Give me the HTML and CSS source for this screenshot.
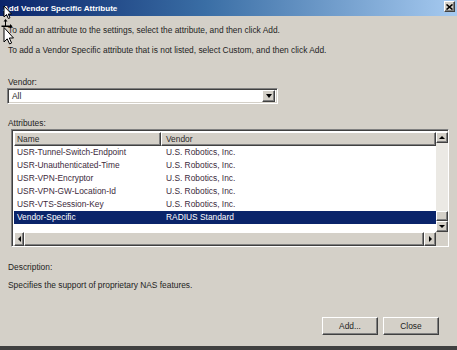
FILE: index.html
```html
<!DOCTYPE html>
<html>
<head>
<meta charset="utf-8">
<link rel="stylesheet" href="styles.css">
</head>
<body>
<div class="window">
  <div class="titlebar">
    <span class="title">Add Vendor Specific Attribute</span>
    <div class="close-btn">
      <svg width="7" height="6" viewBox="0 0 7 6"><path d="M0.5 0.5 L6.5 5.5 M6.5 0.5 L0.5 5.5" stroke="#000" stroke-width="1.6"/></svg>
    </div>
  </div>
  <div class="content">
    <p class="line l1">To add an attribute to the settings, select the attribute, and then click Add.</p>
    <p class="line l2">To add a Vendor Specific attribute that is not listed, select Custom, and then click Add.</p>
    <div class="line lbl-vendor">Vendor:</div>
    <div class="combo sunken">
      <span class="combo-text">All</span>
      <span class="combo-btn raised"><span class="tri-down"></span></span>
    </div>
    <div class="line lbl-attr">Attributes:</div>
    <div class="listbox sunken">
      <div class="lv">
        <div class="lv-header">
          <div class="hcol raised c1">Name</div>
          <div class="hcol raised c2">Vendor</div>
        </div>
        <div class="row"><span class="c1">USR-Tunnel-Switch-Endpoint</span><span class="c2">U.S. Robotics, Inc.</span></div>
        <div class="row"><span class="c1">USR-Unauthenticated-Time</span><span class="c2">U.S. Robotics, Inc.</span></div>
        <div class="row"><span class="c1">USR-VPN-Encryptor</span><span class="c2">U.S. Robotics, Inc.</span></div>
        <div class="row"><span class="c1">USR-VPN-GW-Location-Id</span><span class="c2">U.S. Robotics, Inc.</span></div>
        <div class="row"><span class="c1">USR-VTS-Session-Key</span><span class="c2">U.S. Robotics, Inc.</span></div>
        <div class="row selected"><span class="c1">Vendor-Specific</span><span class="c2">RADIUS Standard</span></div>
      </div>
      <div class="vscroll">
        <div class="sb-btn raised"><span class="tri-up"></span></div>
        <div class="sb-track"></div>
        <div class="sb-thumb-v raised"></div>
        <div class="sb-btn raised"><span class="tri-down small"></span></div>
      </div>
      <div class="hscroll">
        <div class="sb-btn-h raised"><span class="tri-left"></span></div>
        <div class="sb-thumb-h raised"></div>
        <div class="sb-btn-h raised right"><span class="tri-right"></span></div>
      </div>
      <div class="corner"></div>
    </div>
    <div class="line desc-lbl">Description:</div>
    <div class="line desc">Specifies the support of proprietary NAS features.</div>
    <div class="buttons">
      <div class="btn raised">Add...</div>
      <div class="btn raised">Close</div>
    </div>
  </div>
  <svg class="cursor" width="16" height="44" viewBox="0 0 16 44">
    <path d="M4 4 L4 15 L6.5 12.5 L8.3 16.5 L10 15.8 L8.2 12 L11.5 12 Z" fill="#fff" stroke="#000" stroke-width="1"/>
    <path d="M5.5 17 L3.5 19.5 L5 19.5 L5 23.5 L1.5 23.5 L1.5 25 L10 25 L10 26.5 L12.5 24.2 L10 22 L10 23.5 L6 23.5 L6 19.5 L7.5 19.5 Z" fill="#000"/>
    <path d="M4 25.5 L4 40 L7.2 36.8 L9.6 42 L11.6 41 L9.3 36 L13.5 36 Z" fill="#fff" stroke="#000" stroke-width="1"/>
  </svg>
</div>
</body>
</html>
```

FILE: styles.css
```css
* { box-sizing: border-box; }
html, body { margin: 0; padding: 0; }
body {
  width: 457px;
  height: 350px;
  background: #d4d0c8;
  font-family: "Liberation Sans", Arial, sans-serif;
  font-size: 8.4px;
  color: #1e1e1e;
  overflow: hidden;
}
.window {
  position: relative;
  width: 457px;
  height: 350px;
  display: flex;
  flex-direction: column;
  border-bottom: 4px solid #404040;
}
.titlebar {
  height: 16px;
  flex: none;
  display: flex;
  align-items: center;
  justify-content: space-between;
  padding: 0 2px 0 3px;
  background: linear-gradient(to right, #0a246a 0%, #3a6ea5 45%, #a6caf0 100%);
}
.title {
  color: #fff;
  font-weight: bold;
  font-size: 8.1px;
}
.close-btn {
  width: 11px;
  height: 11px;
  margin-top: -3px;
  background: #d4d0c8;
  border: 1px solid;
  border-color: #fff #404040 #404040 #fff;
  box-shadow: inset -1px -1px #808080;
  display: flex;
  align-items: center;
  justify-content: center;
}
.close-btn svg { display: block; }
.content {
  flex: 1;
  padding: 0 0 0 8px;
  display: flex;
  flex-direction: column;
}
.line {
  margin: 0;
  line-height: 10px;
  height: 10px;
  white-space: nowrap;
}
.l1 { margin-top: 9px; }
.l2 { margin-top: 10px; }
.lbl-vendor { margin-top: 22px; }
.sunken {
  border: 1px solid;
  border-color: #808080 #fff #fff #808080;
  box-shadow: inset 1px 1px #404040, inset -1px -1px #d4d0c8;
}
.raised {
  background: #d4d0c8;
  border: 1px solid;
  border-color: #fff #404040 #404040 #fff;
  box-shadow: inset -1px -1px #808080;
}
.combo {
  margin-top: 1px;
  margin-left: -1px;
  width: 271px;
  height: 16px;
  background: #fff;
  display: flex;
  align-items: center;
  padding: 2px 2px 2px 4px;
}
.combo-text { flex: 1; line-height: 10px; }
.combo-btn {
  width: 13px;
  height: 12px;
  display: flex;
  align-items: center;
  justify-content: center;
}
.tri-down {
  width: 0; height: 0;
  border-left: 3.5px solid transparent;
  border-right: 3.5px solid transparent;
  border-top: 4px solid #000;
}
.tri-down.small {
  border-left-width: 3px;
  border-right-width: 3px;
  border-top-width: 3px;
}
.tri-up {
  width: 0; height: 0;
  border-left: 3px solid transparent;
  border-right: 3px solid transparent;
  border-bottom: 3px solid #000;
}
.tri-left {
  width: 0; height: 0;
  border-top: 3px solid transparent;
  border-bottom: 3px solid transparent;
  border-right: 3px solid #000;
}
.tri-right {
  width: 0; height: 0;
  border-top: 3px solid transparent;
  border-bottom: 3px solid transparent;
  border-left: 3px solid #000;
}
.lbl-attr { margin-top: 14px; }
.listbox {
  margin-top: 1px;
  margin-left: 3px;
  width: 438px;
  height: 118px;
  background: #fff;
  padding: 2px;
  display: grid;
  grid-template-columns: 422px 12px;
  grid-template-rows: 100px 14px;
}
.lv {
  overflow: hidden;
  color: #3c2a3c;
}
.lv-header {
  display: flex;
  height: 14px;
}
.hcol {
  height: 14px;
  line-height: 12px;
  color: #2a2a2a;
}
.lv-header .c1 { width: 147px; padding-left: 2px; }
.lv-header .c2 { flex: 1; padding-left: 4px; }
.row {
  display: flex;
  height: 13px;
  line-height: 13px;
  white-space: nowrap;
}
.row:first-of-type { margin-top: 1px; }
.row .c1 { width: 147px; padding-left: 3px; }
.row .c2 { flex: 1; padding-left: 5px; }
.row.selected { background: #0a246a; color: #fff; }
.vscroll {
  display: flex;
  flex-direction: column;
  background: #ebe9e4;
}
.sb-btn {
  height: 11px;
  flex: none;
  display: flex;
  align-items: center;
  justify-content: center;
}
.sb-track { flex: 1; }
.sb-thumb-v { height: 10px; flex: none; }
.hscroll {
  display: flex;
  background: #ebe9e4;
}
.sb-btn-h {
  width: 10px;
  flex: none;
  display: flex;
  align-items: center;
  justify-content: center;
}
.sb-btn-h.right { width: 12px; }
.sb-thumb-h { flex: 1; }
.corner { background: #d4d0c8; }
.desc-lbl { margin-top: 15px; }
.desc { margin-top: 8px; }
.buttons {
  margin-top: 27px;
  display: flex;
  justify-content: flex-end;
  gap: 5px;
  padding-right: 18px;
}
.btn {
  width: 56px;
  height: 18px;
  display: flex;
  align-items: center;
  justify-content: center;
  color: #1e1e1e;
}
.cursor {
  position: absolute;
  left: 0;
  top: 2px;
}
```
